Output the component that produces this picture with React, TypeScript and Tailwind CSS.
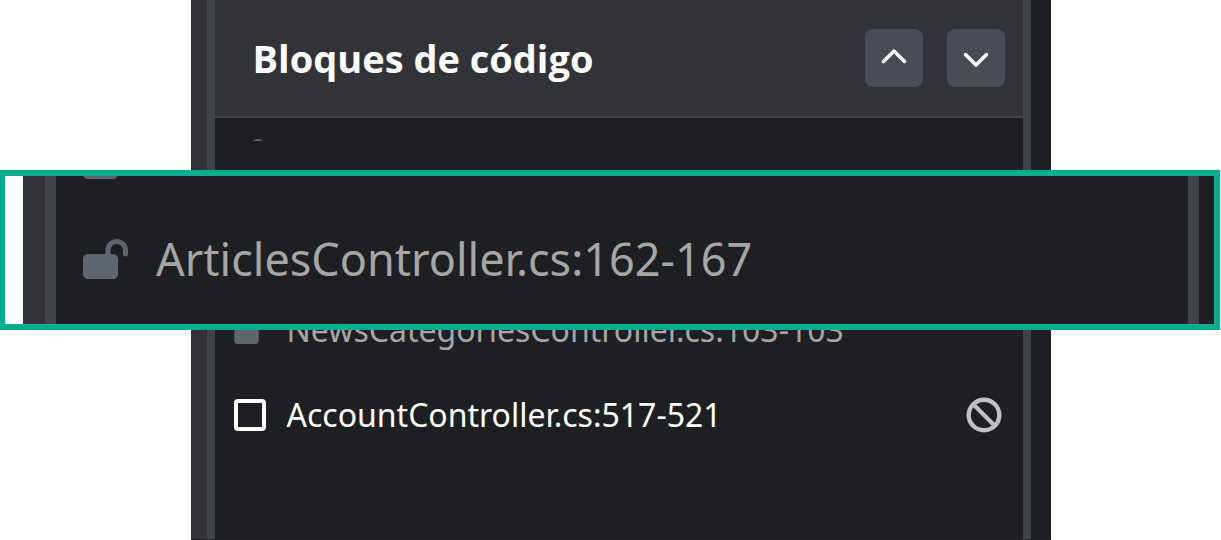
import type { ReactNode } from "react";
import { FaChevronDown, FaChevronUp, FaLockOpen } from "react-icons/fa6";

function NavButton({ label, children }: { label: string; children: ReactNode }) {
  return (
    <button
      type="button"
      aria-label={label}
      className="flex h-[58px] w-[58px] items-center justify-center rounded-lg bg-[#484c54] text-white"
    >
      {children}
    </button>
  );
}

function BanIcon() {
  return (
    <svg viewBox="0 0 36 36" className="h-9 w-9" fill="none" stroke="currentColor" strokeWidth="4.4">
      <circle cx="18" cy="18" r="15.3" />
      <path d="M7.5 7.5 28.5 28.5" strokeWidth="4" />
    </svg>
  );
}

export default function App() {
  return (
    <div className="relative flex h-screen min-h-[540px] justify-center overflow-hidden bg-white pl-5 font-['Noto_Sans',sans-serif]">
      <section className="flex w-[860px] border-b border-[#261e22] bg-[#1e1f23]">
        <div className="w-4 bg-[#323338]" />
        <div className="flex flex-1 flex-col border-x-8 border-[#3f444a]">
          <header className="flex h-[118px] items-center justify-between border-b-2 border-[#3f444a] bg-[#323338] pr-[18px] pl-[38px]">
            <h1 className="font-['Open_Sans','Noto_Sans',sans-serif] text-[38px] leading-[52px] font-bold text-white">
              Bloques de código
            </h1>
            <div className="flex gap-6">
              <NavButton label="Anterior">
                <FaChevronUp className="h-7 w-7" />
              </NavButton>
              <NavButton label="Siguiente">
                <FaChevronDown className="h-7 w-7" />
              </NavButton>
            </div>
          </header>
          <ul className="flex flex-col px-[19px] pt-[21px] text-[32px] leading-[44px]">
            <li className="h-[2px] overflow-hidden text-[#5f656f]">
              <FaLockOpen className="h-7 w-8" />
            </li>
            <li className="mt-[167px] flex items-center gap-[21px] text-[#a6a6a6]">
              <FaLockOpen className="h-7 w-8 text-[#5f656f]" />
              <span>NewsCategoriesController.cs:103-103</span>
            </li>
            <li className="mt-[41px] flex items-center justify-between pr-0.5 text-white">
              <label className="flex items-center gap-[21px]">
                <input
                  type="checkbox"
                  className="h-8 w-8 appearance-none rounded border-4 border-white"
                />
                <span>AccountController.cs:517-521</span>
              </label>
              <button type="button" aria-label="Excluir" className="text-[#c0c0ca]">
                <BanIcon />
              </button>
            </li>
          </ul>
        </div>
        <div className="w-5" />
      </section>

      <div className="absolute inset-x-0 top-[170px] mr-px flex h-40 overflow-hidden border-[6px] border-l-[5px] border-[#06ae90] bg-[#1e1f23]">
        <div className="w-[18px] bg-white" />
        <div className="w-[22px] bg-[#323338]" />
        <div className="flex flex-1 flex-col border-x-[11px] border-[#3f444a] px-[27px] text-[45px] leading-[60px]">
          <div className="flex h-[3px] items-end overflow-hidden text-[#5f656f]">
            <FaLockOpen className="h-10 w-[45px] shrink-0" />
          </div>
          <div className="mt-[50px] flex items-center gap-7 text-[#a6a6a6]">
            <FaLockOpen className="h-10 w-[45px] text-[#5f656f]" />
            <span>ArticlesController.cs:162-167</span>
          </div>
        </div>
        <div className="w-[15px]" />
      </div>
    </div>
  );
}
